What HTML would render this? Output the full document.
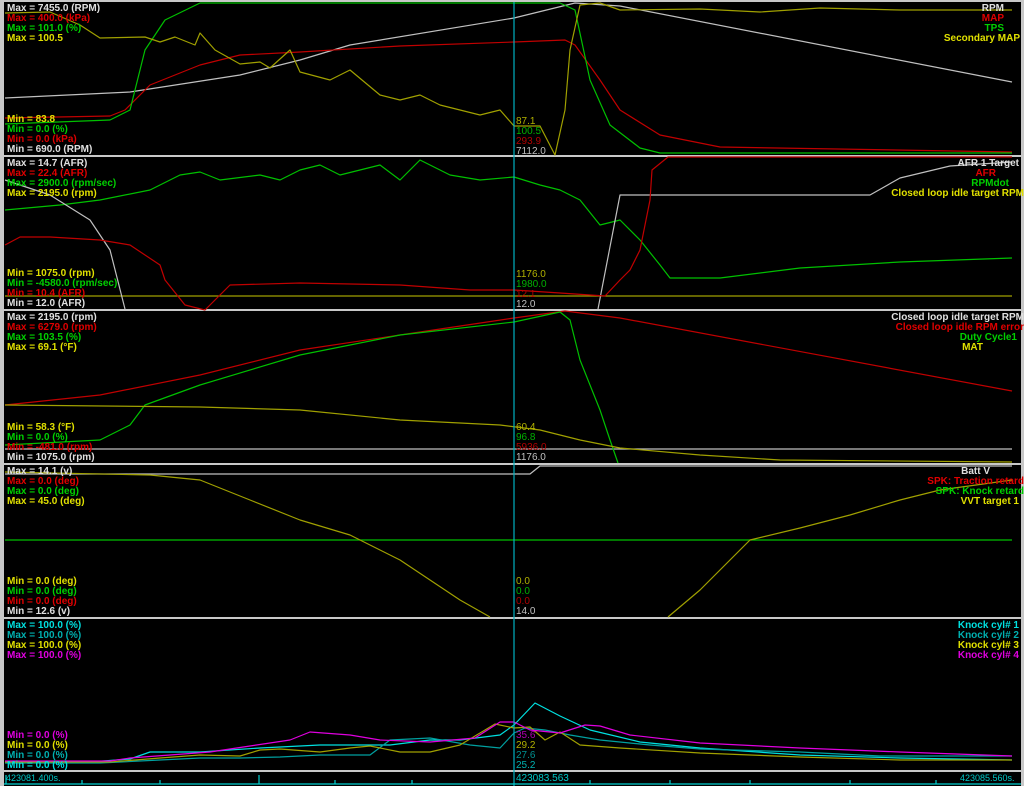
<!DOCTYPE html>
<html><head><meta charset="utf-8"><style>
html,body{margin:0;padding:0;background:#000;width:1024px;height:786px;overflow:hidden}
svg{display:block}
text{font-family:"Liberation Sans",Arial,sans-serif;font-size:10px}
.b{font-weight:bold}
</style></head><body>
<svg width="1024" height="786" viewBox="0 0 1024 786" xmlns="http://www.w3.org/2000/svg">
<rect width="1024" height="786" fill="#000"/>
<rect x="0" y="0" width="4" height="786" fill="#c8c8c8"/>
<rect x="0" y="0" width="1024" height="2" fill="#c8c8c8"/>
<rect x="1021" y="0" width="3" height="786" fill="#c8c8c8"/>
<g stroke="#c8c8c8" stroke-width="2">
<line x1="4" y1="156" x2="1021" y2="156"/>
<line x1="4" y1="310" x2="1021" y2="310"/>
<line x1="4" y1="464" x2="1021" y2="464"/>
<line x1="4" y1="618" x2="1021" y2="618"/>
<line x1="4" y1="771" x2="1021" y2="771"/>
</g>
<g fill="none" stroke-width="1.2" stroke-linejoin="round">
<!-- panel 1 -->
<polyline stroke="#c0c0c0" points="5,98 130,92 240,75 300,60 350,45 514,18 575,3 620,6 1012,82"/>
<polyline stroke="#c00000" points="5,118 110,116 125,110 150,85 200,65 240,55 300,52 400,46 514,42 565,40 575,45 600,80 620,110 660,135 720,147 1012,152"/>
<polyline stroke="#00c000" points="5,124 110,120 130,110 145,50 165,20 200,3 560,3 575,10 590,80 610,125 640,148 660,153 1012,153"/>
<polyline stroke="#a0a000" points="5,13 50,12 80,25 100,38 145,37 160,42 175,37 195,45 200,33 215,50 240,64 260,62 270,68 290,50 300,72 330,80 350,70 380,95 400,100 420,95 440,105 460,110 480,115 500,110 514,126 540,126 555,155 565,110 570,50 580,5 600,3 620,10 700,9 760,12 820,8 900,10 1012,10"/>
<!-- panel 2 -->
<polyline stroke="#a0a000" points="5,296 1012,296"/>
<polyline stroke="#00c000" points="5,210 60,205 100,200 150,190 180,175 200,172 220,180 260,175 280,180 300,170 320,165 340,175 380,165 400,180 420,160 450,175 480,180 514,177 540,185 560,190 580,200 600,225 620,220 640,240 660,265 670,278 720,278 800,268 900,262 1012,258"/>
<polyline stroke="#c0c0c0" points="5,180 50,195 90,220 110,250 125,309"/>
<polyline stroke="#c0c0c0" points="598,309 620,195 870,195 900,178 950,166 1012,162"/>
<polyline stroke="#c00000" points="5,245 20,237 50,237 100,240 130,245 160,265 165,280 185,305 205,310 215,300 230,285 300,283 400,285 470,290 514,290 560,293 605,296 620,280 630,270 640,250 650,200 652,170 668,157 1012,157"/>
<!-- panel 3 -->
<polyline stroke="#c0c0c0" points="5,449 1012,449"/>
<polyline stroke="#c00000" points="5,405 100,395 200,375 300,350 400,335 514,318 565,311 620,318 1012,391"/>
<polyline stroke="#00c000" points="5,445 100,440 130,425 145,405 200,385 300,355 400,335 514,322 560,312 570,320 580,360 600,410 610,440 618,463"/>
<polyline stroke="#a0a000" points="5,405 200,407 300,410 400,420 500,425 540,430 560,435 580,440 620,448 700,455 780,460 1012,462"/>
<!-- panel 4 -->
<polyline stroke="#00c000" points="5,540 1012,540"/>
<polyline stroke="#c0c0c0" points="5,474 530,474 540,466 1012,466"/>
<polyline stroke="#a0a000" points="5,472 150,475 200,480 250,500 300,520 350,535 380,550 400,560 430,580 460,600 490,617"/>
<polyline stroke="#a0a000" points="668,617 700,590 750,540 800,528 850,515 900,500 940,490 1012,480"/>
<!-- panel 5 -->
<polyline stroke="#00e0e0" points="5,762 90,762 130,759 150,752 200,752 260,748 320,745 390,745 430,740 460,740 500,735 514,725 535,703 560,716 590,730 640,742 700,748 800,755 900,758 1012,760"/>
<polyline stroke="#00a0a0" points="5,763 100,763 160,760 200,758 240,758 280,757 320,755 370,755 390,740 430,738 470,745 500,748 514,733 525,728 545,730 570,735 600,740 650,745 700,749 800,752 880,756 1012,756"/>
<polyline stroke="#a0a000" points="5,762 110,762 160,758 200,755 240,756 260,750 280,749 320,752 350,748 370,746 400,752 430,752 460,745 495,724 514,728 530,727 545,740 560,732 580,745 620,748 700,753 800,757 900,760 1012,760"/>
<polyline stroke="#e000e0" points="5,761 110,761 130,758 210,752 250,746 290,740 310,732 350,735 380,740 430,742 475,738 500,722 514,722 530,730 560,733 585,725 600,726 630,735 700,743 800,748 900,752 1012,756"/>
</g>
<line x1="514" y1="2" x2="514" y2="786" stroke="#00b0c0" stroke-width="1.2"/>
<!-- axis -->
<g stroke="#00d0d0" stroke-width="1.2">
<line x1="4" y1="784" x2="1021" y2="784"/>
<line x1="82" y1="780" x2="82" y2="784"/><line x1="160" y1="780" x2="160" y2="784"/>
<line x1="259" y1="775" x2="259" y2="784"/><line x1="335" y1="780" x2="335" y2="784"/>
<line x1="412" y1="780" x2="412" y2="784"/><line x1="590" y1="780" x2="590" y2="784"/>
<line x1="670" y1="780" x2="670" y2="784"/><line x1="750" y1="780" x2="750" y2="784"/>
<line x1="850" y1="780" x2="850" y2="784"/><line x1="936" y1="780" x2="936" y2="784"/>
<line x1="6" y1="775" x2="6" y2="784"/>
</g>
<g fill="#00c8c8">
<text x="6" y="781" style="font-size:9px">423081.400s.</text>
<text x="516" y="781">423083.563</text>
<text x="960" y="781" style="font-size:9px">423085.560s.</text>
</g>
<!-- labels panel1 -->
<g class="b">
<text x="7" y="11" fill="#e0e0e0" class="b">Max = 7455.0 (RPM)</text>
<text x="7" y="21" fill="#e00000" class="b">Max = 400.0 (kPa)</text>
<text x="7" y="31" fill="#00d000" class="b">Max = 101.0 (%)</text>
<text x="7" y="41" fill="#e0e000" class="b">Max = 100.5</text>
<text x="7" y="122" fill="#e0e000" class="b">Min = 83.8</text>
<text x="7" y="132" fill="#00d000" class="b">Min = 0.0 (%)</text>
<text x="7" y="142" fill="#e00000" class="b">Min = 0.0 (kPa)</text>
<text x="7" y="152" fill="#e0e0e0" class="b">Min = 690.0 (RPM)</text>

<text x="7" y="166" fill="#e0e0e0" class="b">Max = 14.7 (AFR)</text>
<text x="7" y="176" fill="#e00000" class="b">Max = 22.4 (AFR)</text>
<text x="7" y="186" fill="#00d000" class="b">Max = 2900.0 (rpm/sec)</text>
<text x="7" y="196" fill="#e0e000" class="b">Max = 2195.0 (rpm)</text>
<text x="7" y="276" fill="#e0e000" class="b">Min = 1075.0 (rpm)</text>
<text x="7" y="286" fill="#00d000" class="b">Min = -4580.0 (rpm/sec)</text>
<text x="7" y="296" fill="#e00000" class="b">Min = 10.4 (AFR)</text>
<text x="7" y="306" fill="#e0e0e0" class="b">Min = 12.0 (AFR)</text>

<text x="7" y="320" fill="#e0e0e0" class="b">Max = 2195.0 (rpm)</text>
<text x="7" y="330" fill="#e00000" class="b">Max = 6279.0 (rpm)</text>
<text x="7" y="340" fill="#00d000" class="b">Max = 103.5 (%)</text>
<text x="7" y="350" fill="#e0e000" class="b">Max = 69.1 (°F)</text>
<text x="7" y="430" fill="#e0e000" class="b">Min = 58.3 (°F)</text>
<text x="7" y="440" fill="#00d000" class="b">Min = 0.0 (%)</text>
<text x="7" y="450" fill="#e00000" class="b">Min = -481.0 (rpm)</text>
<text x="7" y="460" fill="#e0e0e0" class="b">Min = 1075.0 (rpm)</text>

<text x="7" y="474" fill="#e0e0e0" class="b">Max = 14.1 (v)</text>
<text x="7" y="484" fill="#e00000" class="b">Max = 0.0 (deg)</text>
<text x="7" y="494" fill="#00d000" class="b">Max = 0.0 (deg)</text>
<text x="7" y="504" fill="#e0e000" class="b">Max = 45.0 (deg)</text>
<text x="7" y="584" fill="#e0e000" class="b">Min = 0.0 (deg)</text>
<text x="7" y="594" fill="#00d000" class="b">Min = 0.0 (deg)</text>
<text x="7" y="604" fill="#e00000" class="b">Min = 0.0 (deg)</text>
<text x="7" y="614" fill="#e0e0e0" class="b">Min = 12.6 (v)</text>

<text x="7" y="628" fill="#00e0e0" class="b">Max = 100.0 (%)</text>
<text x="7" y="638" fill="#00b0b0" class="b">Max = 100.0 (%)</text>
<text x="7" y="648" fill="#e0e000" class="b">Max = 100.0 (%)</text>
<text x="7" y="658" fill="#e000e0" class="b">Max = 100.0 (%)</text>
<text x="7" y="738" fill="#e000e0" class="b">Min = 0.0 (%)</text>
<text x="7" y="748" fill="#e0e000" class="b">Min = 0.0 (%)</text>
<text x="7" y="758" fill="#00b0b0" class="b">Min = 0.0 (%)</text>
<text x="7" y="768" fill="#00e0e0" class="b">Min = 0.0 (%)</text>
</g>
<!-- cursor values -->
<g>
<text x="516" y="124" fill="#b0b000">87.1</text>
<text x="516" y="134" fill="#00b000">100.5</text>
<text x="516" y="144" fill="#b00000">293.9</text>
<text x="516" y="154" fill="#c0c0c0">7112.0</text>
<text x="516" y="277" fill="#b0b000">1176.0</text>
<text x="516" y="287" fill="#00b000">1980.0</text>
<text x="516" y="297" fill="#b00000">12.1</text>
<text x="516" y="307" fill="#c0c0c0">12.0</text>
<text x="516" y="430" fill="#b0b000">60.4</text>
<text x="516" y="440" fill="#00b000">96.8</text>
<text x="516" y="450" fill="#b00000">5936.0</text>
<text x="516" y="460" fill="#c0c0c0">1176.0</text>
<text x="516" y="584" fill="#b0b000">0.0</text>
<text x="516" y="594" fill="#00b000">0.0</text>
<text x="516" y="604" fill="#b00000">0.0</text>
<text x="516" y="614" fill="#c0c0c0">14.0</text>
<text x="516" y="738" fill="#b000b0">35.6</text>
<text x="516" y="748" fill="#b0b000">29.2</text>
<text x="516" y="758" fill="#009090">27.6</text>
<text x="516" y="768" fill="#00b0b0">25.2</text>
</g>
<!-- right legends -->
<g class="b" text-anchor="end">
<text x="1004" y="11" fill="#e0e0e0" class="b">RPM</text>
<text x="1004" y="21" fill="#e00000" class="b">MAP</text>
<text x="1004" y="31" fill="#00d000" class="b">TPS</text>
<text x="1020" y="41" fill="#e0e000" class="b">Secondary MAP</text>
<text x="1019" y="166" fill="#e0e0e0" class="b">AFR 1 Target</text>
<text x="996" y="176" fill="#e00000" class="b">AFR</text>
<text x="1009" y="186" fill="#00d000" class="b">RPMdot</text>
<text x="1024" y="196" fill="#e0e000" class="b">Closed loop idle target RPM</text>
<text x="1024" y="320" fill="#e0e0e0" class="b">Closed loop idle target RPM</text>
<text x="1024" y="330" fill="#e00000" class="b">Closed loop idle RPM error</text>
<text x="1017" y="340" fill="#00d000" class="b">Duty Cycle1</text>
<text x="983" y="350" fill="#e0e000" class="b">MAT</text>
<text x="990" y="474" fill="#e0e0e0" class="b">Batt V</text>
<text x="1024" y="484" fill="#e00000" class="b">SPK: Traction retard</text>
<text x="1024" y="494" fill="#00d000" class="b">SPK: Knock retard</text>
<text x="1019" y="504" fill="#e0e000" class="b">VVT target 1</text>
<text x="1019" y="628" fill="#00e0e0" class="b">Knock cyl# 1</text>
<text x="1019" y="638" fill="#00b0b0" class="b">Knock cyl# 2</text>
<text x="1019" y="648" fill="#e0e000" class="b">Knock cyl# 3</text>
<text x="1019" y="658" fill="#e000e0" class="b">Knock cyl# 4</text>
</g>
</svg>
</body></html>
